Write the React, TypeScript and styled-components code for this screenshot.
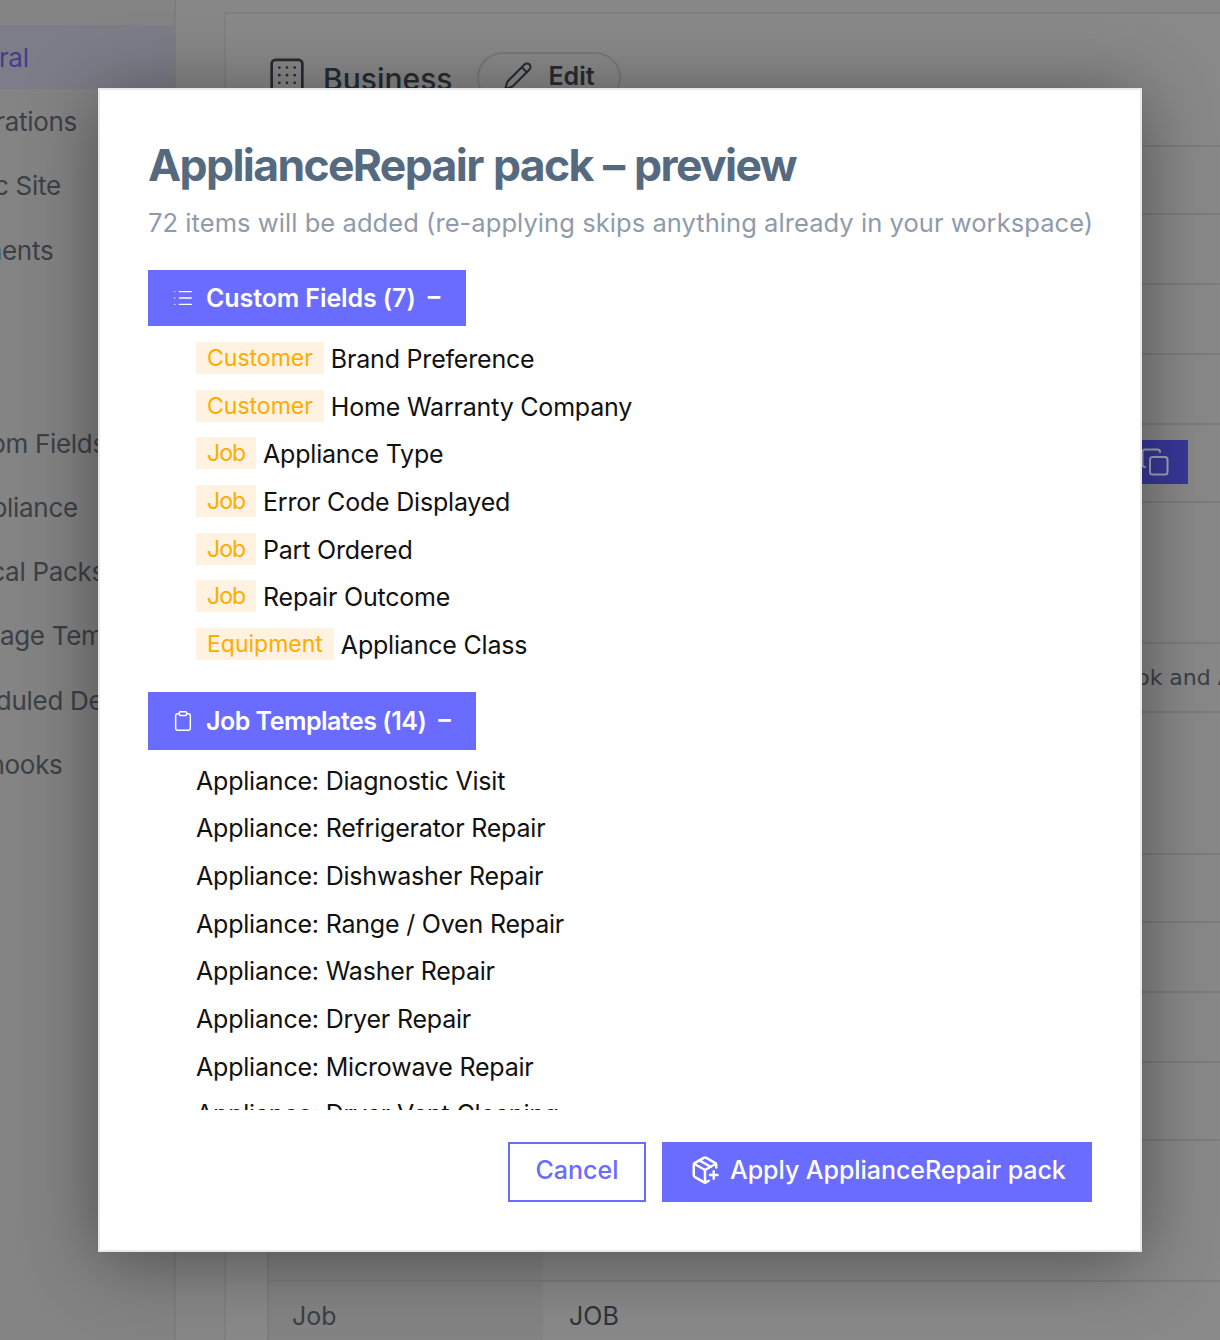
import React from 'react';
import styled, { createGlobalStyle } from 'styled-components';
import { Building, Pencil, Copy, Clipboard, List, PackagePlus } from 'lucide-react';

const GlobalStyle = createGlobalStyle`
  html, body { margin: 0; padding: 0; height: 100%; overflow: hidden; }
  body { background: #fdfdfd; font-family: "Inter", "Liberation Sans", sans-serif; }
`;

const Page = styled.div`
  position: relative;
  width: 1220px;
  height: 1340px;
  overflow: hidden;
  display: flex;
  background: #fafafa;
`;

const Sidebar = styled.aside`
  flex: 0 0 176px;
  width: 176px;
  min-width: 0;
  height: 100%;
  box-sizing: border-box;
  padding-top: 25px;
  border-right: 2px solid #e9e9ec;
  background: #f5f5f7;
`;

const SideItem = styled.div<{ $active?: boolean; $gapAfter?: boolean }>`
  height: 64.3px;
  margin-bottom: ${(p) => (p.$gapAfter ? '128.7px' : '0')};
  display: flex;
  align-items: center;
  white-space: nowrap;
  overflow: hidden;
  font-size: 26px;
  letter-spacing: -0.3px;
  color: ${(p) => (p.$active ? '#6a6cff' : '#646e78')};
  background: ${(p) => (p.$active ? '#e7e7ff' : 'transparent')};
  span { margin-left: -65px; }
`;

const Main = styled.main`
  flex: 1;
  min-width: 0;
  padding: 12px 0 0 48px;
`;

const Card = styled.section`
  width: 1100px;
  height: 1400px;
  box-sizing: border-box;
  padding: 36px 0 0 41px;
  border: 2px solid #ededf0;
  background: #ffffff;
`;

const CardHead = styled.div`
  display: flex;
  align-items: center;
  height: 56px;
  margin-bottom: 39px;
  color: #384551;
  svg { flex: none; }
`;

const BusinessIcon = styled(Building)`
  margin: 2px 0 0 -3px;
`;

const CardTitle = styled.h2`
  margin: 2px 25px 0 13px;
  font-size: 30px;
  font-weight: 500;
`;

const EditPill = styled.div`
  display: flex;
  align-items: center;
  gap: 15px;
  height: 52px;
  padding: 0 24px 5px 24px;
  box-sizing: border-box;
  border: 2px solid #d9dee3;
  border-radius: 28px;
  font-size: 25px;
  font-weight: 600;
`;

const Row = styled.div<{ $h: number }>`
  display: flex;
  height: ${(p) => p.$h}px;
  box-sizing: border-box;
  border-top: 2px solid #e4e6e8;
  border-left: 2px solid #e4e6e8;
  color: #646e78;
  font-size: 25px;
`;

const RowKey = styled.div`
  flex: 0 0 274px;
  box-sizing: border-box;
  padding: 19px 0 0 23px;
  background: #f4f4f6;
`;

const RowValue = styled.div`
  flex: 1;
  min-width: 0;
  box-sizing: border-box;
  padding: 19px 0 0 26px;
  color: #4a5560;
`;

const CopyButton = styled.div`
  position: relative;
  z-index: 2;
  display: flex;
  align-items: center;
  justify-content: flex-end;
  width: 110px;
  height: 44px;
  margin: -4px 0 0 509px;
  padding-right: 18px;
  box-sizing: border-box;
  background: #38389a;
  color: #a3a3ba;
`;

const LogoText = styled.div`
  margin: 2px 0 0 490px;
  white-space: nowrap;
  font-family: "DejaVu Sans", sans-serif;
  font-size: 22px;
  color: #646e78;
`;

const Backdrop = styled.div`
  position: absolute;
  inset: 0;
  z-index: 1;
  background: rgba(20, 20, 20, 0.5);
`;

const Modal = styled.div`
  position: absolute;
  z-index: 3;
  left: 98px;
  top: 88px;
  width: 1044px;
  height: 1164px;
  box-sizing: border-box;
  padding: 48px;
  display: flex;
  flex-direction: column;
  background: #ffffff;
  border: 2px solid #e9e9ea;
  box-shadow: 0 8px 70px rgba(0, 0, 0, 0.42);
`;

const Title = styled.h1`
  margin: 0;
  height: 54px;
  line-height: 54px;
  font-size: 44.5px;
  font-weight: 700;
  letter-spacing: -1.65px;
  word-spacing: 1.5px;
  color: #566a7f;
`;

const Subtitle = styled.p`
  margin: 13px 0 0;
  height: 36px;
  line-height: 36px;
  font-size: 25.5px;
  font-weight: 400;
  letter-spacing: 0.06px;
  white-space: nowrap;
  color: #8f9bab;
`;

const ScrollArea = styled.div`
  margin-top: 29px;
  height: 840px;
  overflow: hidden;
`;

const SectionButton = styled.div<{ $h: number; $w: number; $spacing: number }>`
  display: flex;
  align-items: center;
  width: ${(p) => p.$w}px;
  height: ${(p) => p.$h}px;
  box-sizing: border-box;
  padding-left: 24px;
  background: #696cff;
  color: #fff;
  font-size: 25px;
  font-weight: 600;
  letter-spacing: ${(p) => p.$spacing}px;
  svg { flex: none; margin-right: 12px; }
`;

const Dash = styled.span`
  margin: -4px 0 0 12px;
`;

const ItemList = styled.ul<{ $top: number; $after: number }>`
  list-style: none;
  margin: ${(p) => p.$top}px 0 ${(p) => p.$after}px;
  padding: 0 0 0 48px;
`;

const Item = styled.li`
  display: flex;
  align-items: center;
  height: 47.7px;
  font-size: 25px;
  letter-spacing: -0.2px;
  color: #111;
  white-space: nowrap;
`;

const Tag = styled.span<{ $tight?: boolean }>`
  display: inline-flex;
  align-items: center;
  height: 32px;
  margin: -2px 7px 0 0;
  padding: 0 11px;
  background: #fff2e0;
  color: #ffab00;
  font-size: 23px;
  letter-spacing: ${(p) => (p.$tight ? '-1px' : '0')};
`;

const Footer = styled.div`
  margin-top: 32px;
  display: flex;
  justify-content: flex-end;
  gap: 16px;
`;

const OutlineButton = styled.div`
  display: flex;
  align-items: center;
  justify-content: center;
  width: 138px;
  height: 60px;
  box-sizing: border-box;
  padding-bottom: 5px;
  border: 2px solid #696cff;
  color: #696cff;
  font-size: 25px;
  font-weight: 500;
`;

const PrimaryButton = styled.div`
  display: flex;
  align-items: center;
  width: 430px;
  height: 60px;
  box-sizing: border-box;
  padding: 0 0 4px 28px;
  gap: 10px;
  background: #696cff;
  color: #fff;
  font-size: 25px;
  font-weight: 500;
  letter-spacing: -0.05px;
  white-space: nowrap;
`;

const mainItems = ['General', 'Integrations', 'Public Site', 'Payments'];
const otherItems = ['Custom Fields', 'Compliance', 'Vertical Packs', 'Message Templates', 'Scheduled Deliveries', 'Webhooks'];
const customFields = [
  ['Customer', 'Brand Preference'],
  ['Customer', 'Home Warranty Company'],
  ['Job', 'Appliance Type'],
  ['Job', 'Error Code Displayed'],
  ['Job', 'Part Ordered'],
  ['Job', 'Repair Outcome'],
  ['Equipment', 'Appliance Class'],
];
const templates = [
  'Appliance: Diagnostic Visit',
  'Appliance: Refrigerator Repair',
  'Appliance: Dishwasher Repair',
  'Appliance: Range / Oven Repair',
  'Appliance: Washer Repair',
  'Appliance: Dryer Repair',
  'Appliance: Microwave Repair',
  'Appliance: Dryer Vent Cleaning',
];
const rowHeights = [68, 70, 70, 70, 78, 141, 69, 142, 68, 70, 70, 78, 141, 140];

const App: React.FC = () => (
  <>
    <GlobalStyle />
    <Page>
      <Sidebar>
        {mainItems.map((label, i) => (
          <SideItem key={label} $active={i === 0} $gapAfter={i === 3}><span>{label}</span></SideItem>
        ))}
        {otherItems.map((label) => (
          <SideItem key={label}><span>{label}</span></SideItem>
        ))}
      </Sidebar>
      <Main>
        <Card>
          <CardHead>
            <BusinessIcon size={46} strokeWidth={1.4} />
            <CardTitle>Business</CardTitle>
            <EditPill><Pencil size={30} strokeWidth={1.6} />Edit</EditPill>
          </CardHead>
          {rowHeights.map((h, i) => (
            <Row key={i} $h={h}>
              {i === 13 ? <RowKey>Job</RowKey> : <RowKey />}
              <RowValue>
                {i === 4 && <CopyButton><Copy size={30} strokeWidth={1.6} /></CopyButton>}
                {i === 6 && <LogoText>Facebook and Apple</LogoText>}
                {i === 13 && 'JOB'}
              </RowValue>
            </Row>
          ))}
        </Card>
      </Main>
      <Backdrop />
      <Modal>
        <Title>ApplianceRepair pack – preview</Title>
        <Subtitle>72 items will be added (re-applying skips anything already in your workspace)</Subtitle>
        <ScrollArea>
          <SectionButton $w={318} $h={56} $spacing={-0.1}>
            <List size={22} strokeWidth={1.4} />Custom Fields (7)<Dash>–</Dash>
          </SectionButton>
          <ItemList $top={9} $after={23}>
            {customFields.map(([tag, name]) => (
              <Item key={name}><Tag $tight={tag === 'Job'}>{tag}</Tag>{name}</Item>
            ))}
          </ItemList>
          <SectionButton $w={328} $h={58} $spacing={-0.5}>
            <Clipboard size={22} strokeWidth={1.6} />Job Templates (14)<Dash>–</Dash>
          </SectionButton>
          <ItemList $top={7} $after={0}>
            {templates.map((name) => <Item key={name}>{name}</Item>)}
          </ItemList>
        </ScrollArea>
        <Footer>
          <OutlineButton>Cancel</OutlineButton>
          <PrimaryButton><PackagePlus size={30} strokeWidth={2} />Apply ApplianceRepair pack</PrimaryButton>
        </Footer>
      </Modal>
    </Page>
  </>
);

export default App;
